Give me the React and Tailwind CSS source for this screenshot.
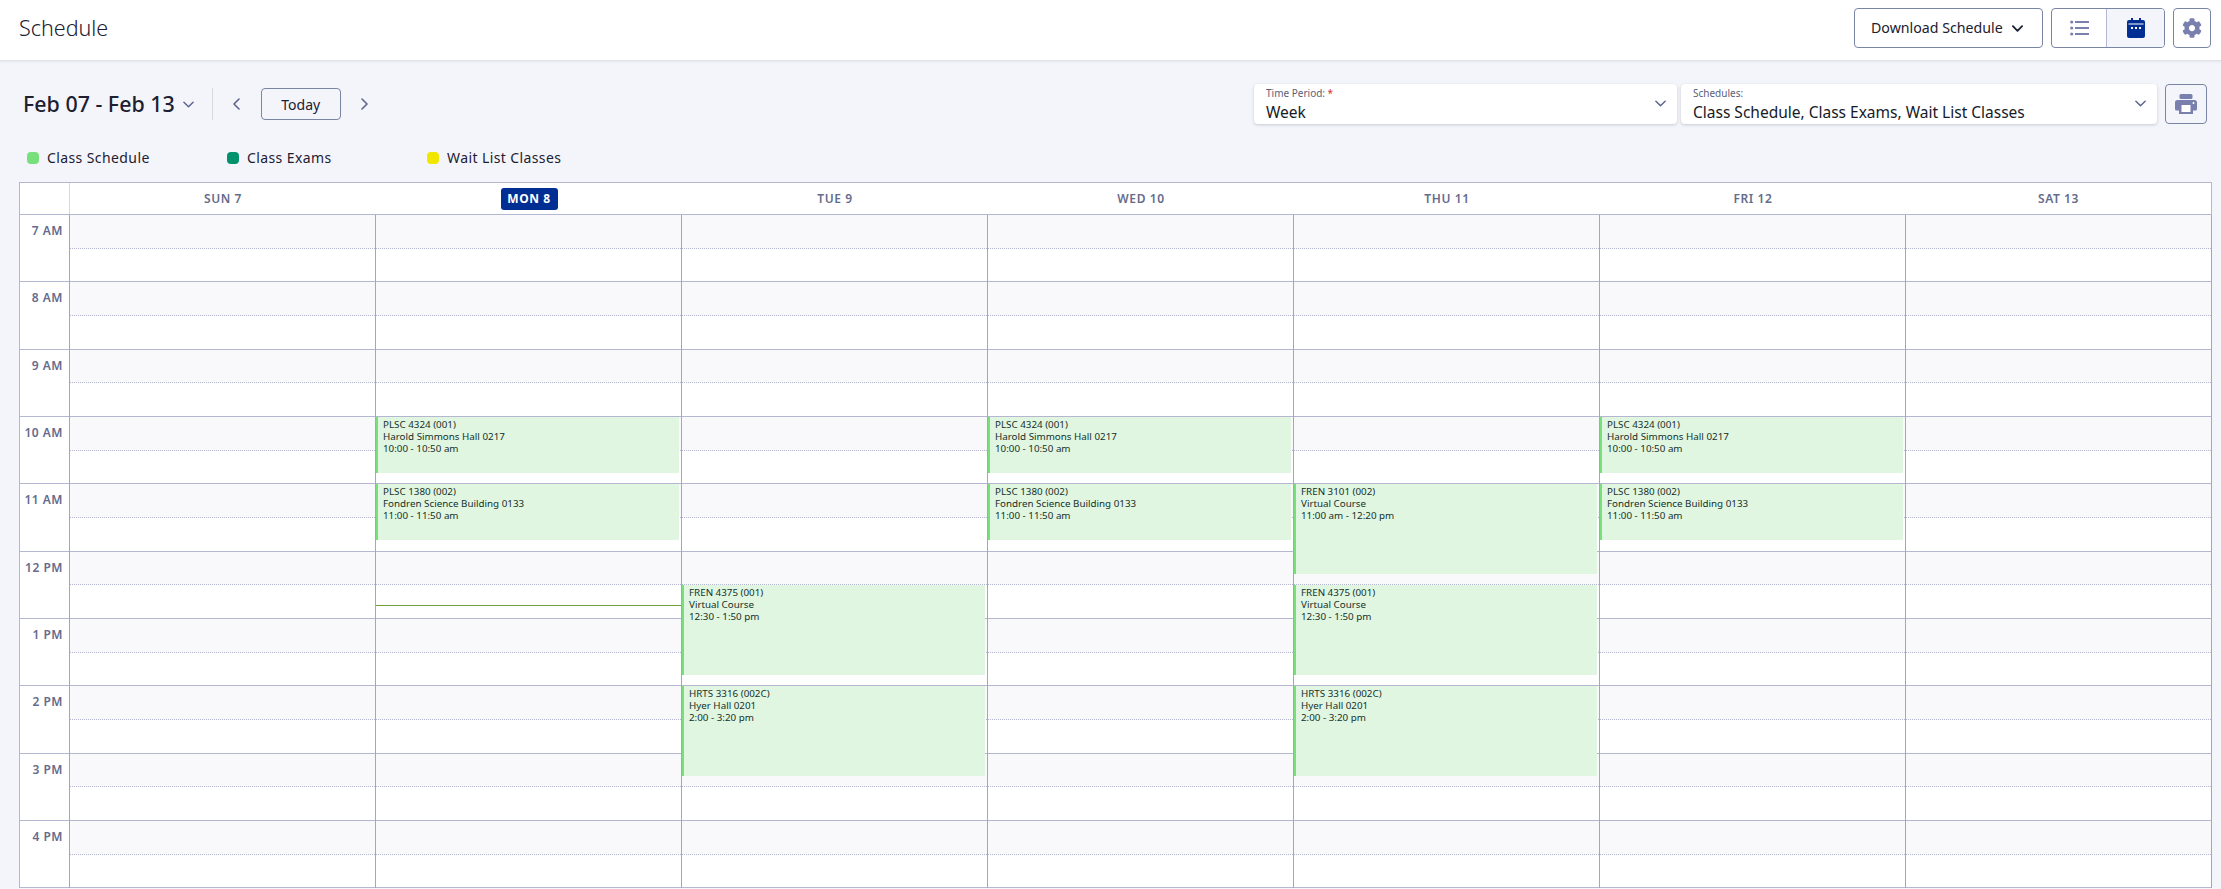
import React from "react";
import { FaCog } from "react-icons/fa";

const font = "font-['Noto_Sans','Open_Sans',sans-serif]";

const Chevron = ({ className, dir = "down", sw = 1.6 }) => {
  const d = { down: "M1 1l5 5 5-5", left: "M6 1L1 6l5 5", right: "M1 1l5 5-5 5" }[dir];
  const vb = dir === "down" ? "0 0 12 7" : "0 0 7 12";
  return (
    <svg viewBox={vb} className={className} fill="none" stroke="currentColor" strokeWidth={sw} strokeLinecap="round" strokeLinejoin="round">
      <path d={d} />
    </svg>
  );
};

const ListIcon = () => (
  <svg viewBox="0 0 19 16" className="w-[19px] h-[16px] text-[#7a80ad]" fill="currentColor">
    <circle cx="1.7" cy="2" r="1.6" />
    <circle cx="1.7" cy="8" r="1.6" />
    <circle cx="1.7" cy="14" r="1.6" />
    <rect x="5" y="1" width="14" height="2" />
    <rect x="5" y="7" width="14" height="2" />
    <rect x="5" y="13" width="14" height="2" />
  </svg>
);

const CalendarIcon = () => (
  <svg viewBox="0 0 18 20" className="w-[18px] h-[20px] text-[#002e93]">
    <path fill="currentColor" d="M4 0h2v2h6V0h2v2h2a2 2 0 012 2v14a2 2 0 01-2 2H2a2 2 0 01-2-2V4a2 2 0 012-2h2z" />
    <rect x="1.5" y="5.500" width="15" height="1" fill="#fff" />
    <rect x="4" y="9" width="2" height="2" fill="#fff" />
    <rect x="8" y="9" width="2" height="2" fill="#fff" />
    <rect x="12" y="9" width="2" height="2" fill="#fff" />
  </svg>
);

const PrintIcon = () => (
  <svg viewBox="0 0 22 20" className="w-[22px] h-[20px] text-[#7a80ad]">
    <rect x="4.500" y="0" width="13" height="5" rx="1.500" fill="currentColor" />
    <path fill="currentColor" d="M2.500 6h17A2.500 2.500 0 0122 8.500V15a1.500 1.500 0 01-1.500 1.500H18V20H4v-3.500H1.500A1.500 1.500 0 010 15V8.500A2.500 2.500 0 012.500 6z" />
    <rect x="6.500" y="11" width="9" height="7" fill="#fff" />
    <circle cx="18.500" cy="9" r="1" fill="#fff" />
  </svg>
);

const hours = ["7 AM", "8 AM", "9 AM", "10 AM", "11 AM", "12 PM", "1 PM", "2 PM", "3 PM", "4 PM"];

const plsc4324 = { cls: "top-[202px] h-[56px]", a: "PLSC 4324 (001)", b: "Harold Simmons Hall 0217", c: "10:00 - 10:50 am" };
const plsc1380 = { cls: "top-[269px] h-[56px]", a: "PLSC 1380 (002)", b: "Fondren Science Building 0133", c: "11:00 - 11:50 am" };
const fren4375 = { cls: "top-[370px] h-[90px]", a: "FREN 4375 (001)", b: "Virtual Course", c: "12:30 - 1:50 pm" };
const hrts = { cls: "top-[471px] h-[90px]", a: "HRTS 3316 (002C)", b: "Hyer Hall 0201", c: "2:00 - 3:20 pm" };
const fren3101 = { cls: "top-[269px] h-[90px]", a: "FREN 3101 (002)", b: "Virtual Course", c: "11:00 am - 12:20 pm" };

const days = [
  { label: "SUN 7", events: [] },
  { label: "MON 8", today: true, events: [plsc4324, plsc1380] },
  { label: "TUE 9", events: [fren4375, hrts] },
  { label: "WED 10", events: [plsc4324, plsc1380] },
  { label: "THU 11", events: [fren3101, fren4375, hrts] },
  { label: "FRI 12", events: [plsc4324, plsc1380] },
  { label: "SAT 13", events: [] },
];

const HourCell = () => (
  <div className="h-[67.33px] border-b border-[#b5b6d0]">
    <div className="h-[33.67px] bg-[#f9f9fb] border-b border-dotted border-[#b5b6d0]" />
  </div>
);

const LegendItem = ({ color, label }) => (
  <div className="w-[200px] flex items-center gap-2">
    <span className={`w-3 h-3 rounded-[4px] ${color}`} />
    <span className="text-[14px] leading-5 tracking-[0.4px] text-[#1c2030]">{label}</span>
  </div>
);

const SelectCard = ({ w, label, req, value }) => (
  <div className={`${w} h-10 bg-white rounded shadow-[0_1px_3px_rgba(60,64,100,0.25)] pl-3 pr-[11px] flex items-center justify-between`}>
    <div className="flex flex-col">
      <span className="text-[10px] leading-3 text-[#5a6078]">
        {label}
        {req && <span className="text-[#d0342c]"> *</span>}
      </span>
      <span className="text-[15.500px] leading-5 mt-[3px] text-[#161a28]">{value}</span>
    </div>
    <Chevron className="w-[11px] h-[7px] -mt-[2px] text-[#5d648f]" />
  </div>
);

export default function App() {
  return (
    <div className={`${font} h-screen overflow-hidden bg-[#f4f5fa]`}>
      <header className="h-[61px] bg-white border-b border-[#e2e3ea] shadow-[0_1px_2px_rgba(60,64,100,0.08)] pl-[19px] pr-[10px] flex items-start justify-between">
        <h1 className="text-[21.500px] leading-8 mt-[12px] font-light text-[#1c2030]">Schedule</h1>
        <div className="flex items-center mt-2">
          <button className="w-[189px] h-10 border border-[#7a84a3] rounded flex items-center pl-4 gap-[9px] text-[14.200px] text-[#1c2030]">
            Download Schedule
            <Chevron className="w-[11px] h-[7px]" sw={2} />
          </button>
          <div className="ml-2 w-[114px] h-10 border border-[#7a84a3] rounded flex overflow-hidden">
            <div className="w-[55px] border-r border-[#b5b6d0] flex items-center justify-center"><ListIcon /></div>
            <div className="flex-1 bg-[#f4f5fa] flex items-center justify-center"><CalendarIcon /></div>
          </div>
          <button className="ml-2 w-[38px] h-10 border border-[#7a84a3] rounded flex items-center justify-center"><FaCog className="w-5 h-5 text-[#7a80ad]" /></button>
        </div>
      </header>

      <div className="h-[23px]" />
      <div className="h-10 flex items-center justify-between pl-[23px] pr-[14px]">
        <div className="flex items-center">
          <span className="text-[21.400px] font-medium text-[#1c2030] leading-8">Feb 07 - Feb 13</span>
          <Chevron className="ml-[8px] w-[11px] h-[7px] text-[#5d648f]" />
          <div className="ml-[18px] w-px h-8 bg-[#d8d9e2]" />
          <Chevron dir="left" className="ml-[20px] w-[7px] h-[12px] text-[#5d648f]" />
          <button className="ml-[21px] w-[80px] h-8 border border-[#7a84a3] rounded text-[14px] text-[#1c2030]">Today</button>
          <Chevron dir="right" className="ml-[20px] w-[7px] h-[12px] text-[#5d648f]" />
        </div>
        <div className="flex items-center gap-1">
          <SelectCard w="w-[423px]" label="Time Period:" req value="Week" />
          <SelectCard w="w-[476px]" label="Schedules:" value="Class Schedule, Class Exams, Wait List Classes" />
          <button className="ml-1 w-[42px] h-10 border border-[#7a84a3] rounded flex items-center justify-center"><PrintIcon /></button>
        </div>
      </div>

      <div className="mt-[24px] h-5 pl-[27px] flex items-center">
        <LegendItem color="bg-[#77e07a]" label="Class Schedule" />
        <LegendItem color="bg-[#00926b]" label="Class Exams" />
        <LegendItem color="bg-[#f0e600]" label="Wait List Classes" />
      </div>

      <div className="mt-[14px] ml-[19px] w-[2193px] bg-white border-t border-l border-[#b5b6d0]">
        <div className="flex h-[32px] border-b border-[#b5b6d0]">
          <div className="w-[50px] border-r border-[#d8d9e2]" />
          {days.map((d) => (
            <div key={d.label} className="w-[306px] flex items-center justify-center last:border-r last:border-[#b5b6d0]">
              {d.today ? (
                <span className="h-[22px] w-[57px] rounded-[3px] bg-[#002e93] text-white text-[12px] font-bold tracking-[0.6px] flex items-center justify-center">{d.label}</span>
              ) : (
                <span className="text-[12px] font-semibold tracking-[0.6px] text-[#656b8c]">{d.label}</span>
              )}
            </div>
          ))}
        </div>
        <div className="flex">
          <div className="w-[50px] border-r border-[#a3a5c2]">
            {hours.map((h) => (
              <div key={h} className="h-[67.33px] border-b border-[#b5b6d0] pr-[6px] pt-[8px] text-right text-[12px] leading-4 font-semibold tracking-[0.5px] text-[#656b8c]">{h}</div>
            ))}
          </div>
          {days.map((d) => (
            <div key={d.label} className="relative w-[306px] border-r border-[#a3a5c2]">
              {hours.map((h) => <HourCell key={h} />)}
              {d.label === "MON 8" && <div className="absolute left-0 right-0 top-[390px] h-px bg-[#6ea03c]" />}
              {d.events.map((e) => (
                <div key={e.a} className={`absolute left-0 right-[2px] ${e.cls} bg-[#e1f6e1] border-l-2 border-[#77e07a] pl-[5px] pt-[2px] text-[9.800px] leading-3 text-[#16302b]`}>
                  <div>{e.a}</div>
                  <div>{e.b}</div>
                  <div>{e.c}</div>
                </div>
              ))}
            </div>
          ))}
        </div>
      </div>
    </div>
  );
}
